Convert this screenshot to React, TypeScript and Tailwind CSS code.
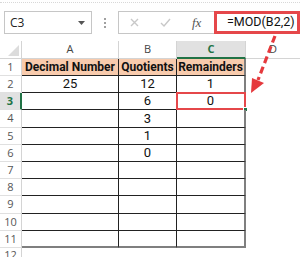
import React from "react";

const rows = [
  { n: 1, a: "Decimal Number", b: "Quotients", c: "Remainders", h: true },
  { n: 2, a: "25", b: "12", c: "1" },
  { n: 3, a: "", b: "6", c: "0" },
  { n: 4, a: "", b: "3", c: "" },
  { n: 5, a: "", b: "1", c: "" },
  { n: 6, a: "", b: "0", c: "" },
  { n: 7, a: "", b: "", c: "" },
  { n: 8, a: "", b: "", c: "" },
  { n: 9, a: "", b: "", c: "" },
  { n: 10, a: "", b: "", c: "" },
  { n: 11, a: "", b: "", c: "" },
];

const cellFont = { fontFamily: "Roboto, 'Open Sans', sans-serif" };

export default function App() {
  return (
    <div className="relative w-[300px] h-[257px] bg-white overflow-hidden" style={cellFont}>
      {/* toolbar */}
      <div className="h-[41px] flex flex-col">
        <div className="h-[3px] border-b border-dotted border-[#d8d8d8]" />
        <div className="flex items-start mt-[8px]">
          <div className="ml-[4px] w-[88px] h-[23px] border border-[#c6c6c6] flex items-center justify-between pl-[5px] pr-[6px]">
            <span className="text-[12px] text-[#222]" style={{ fontFamily: "'Open Sans', sans-serif" }}>C3</span>
            <svg width="7" height="4" viewBox="0 0 7 4"><path d="M0 0 L7 0 L3.5 4 Z" fill="#555" /></svg>
          </div>
          <div className="w-[26px] h-[23px] flex flex-col items-center justify-center gap-[2px]">
            <div className="w-[2px] h-[2px] bg-[#a0a0a0]" />
            <div className="w-[2px] h-[2px] bg-[#a0a0a0]" />
            <div className="w-[2px] h-[2px] bg-[#a0a0a0]" />
          </div>
          <div className="flex-1 h-[23px] border border-r-0 border-[#c6c6c6] flex items-center">
            <div className="w-[95px] flex items-center">
              <svg className="ml-[11px]" width="9" height="9" viewBox="0 0 9 9">
                <path d="M1 1 L8 8 M8 1 L1 8" stroke="#c8c8c8" strokeWidth="1.4" />
              </svg>
              <svg className="ml-[21px]" width="11" height="9" viewBox="0 0 11 9">
                <path d="M1 5 L4 8 L10 1" stroke="#c8c8c8" strokeWidth="1.4" fill="none" />
              </svg>
              <span className="ml-[21px] text-[13px] italic text-[#555]" style={{ fontFamily: "'Liberation Serif', serif" }}>fx</span>
            </div>
            <div className="w-[86px] h-[23px] border-[3px] border-[#e5474a] flex items-center pl-[10px]">
              <span className="text-[12.5px] text-[#111] whitespace-nowrap">=MOD(B2,2)</span>
            </div>
          </div>
        </div>
      </div>

      {/* column headers */}
      <div className="flex h-[18px] text-[11px] text-[#444]" style={{ fontFamily: "'Open Sans', sans-serif" }}>
        <div className="relative w-[22px] border-r border-b border-[#d4d4d4]">
          <svg className="absolute right-[2px] bottom-[2px]" width="11" height="11" viewBox="0 0 11 11">
            <path d="M11 0 L11 11 L0 11 Z" fill="#dcdcdc" />
          </svg>
        </div>
        <div className="w-[97px] flex items-center justify-center border-r border-b border-[#d4d4d4]">A</div>
        <div className="w-[58px] flex items-center justify-center border-r border-b border-[#d4d4d4]">B</div>
        <div className="w-[69px] flex items-center justify-center bg-[#e1e1e1] border-r border-[#d4d4d4] border-b-2 border-b-[#217346] text-[#217346] font-bold">C</div>
        <div className="flex-1 flex items-center justify-center border-b border-[#d4d4d4]">D</div>
      </div>

      {/* rows */}
      {rows.map((r) => {
        const sel = r.n === 3;
        const h = r.n === 4 || r.n === 9 ? "h-[18px]" : "h-[17px]";
        const last = r.n === 11;
        const bb = last ? "border-b-2 border-b-[#7f7f7f]" : "border-b border-b-[#222]";
        const bg = r.h ? "bg-[#f8cbad] font-bold text-[12px]" : "text-[13px]";
        return (
          <div key={r.n} className={`flex ${h}`}>
            <div
              className={`w-[22px] flex items-center justify-center text-[11px] border-b border-[#e0e0e0] ${
                sel ? "bg-[#e1e1e1] text-[#217346] font-bold border-r-2 border-r-[#217346]" : "text-[#555] border-r border-r-[#d4d4d4]"
              }`}
              style={{ fontFamily: "'Open Sans', sans-serif" }}
            >
              {r.n}
            </div>
            <div className={`w-[97px] flex items-center justify-center whitespace-nowrap text-[#111] border-r border-r-[#222] ${bb} ${bg}`}>{r.a}</div>
            <div className={`w-[58px] flex items-center justify-center whitespace-nowrap text-[#111] border-r border-r-[#222] ${bb} ${bg}`}>{r.b}</div>
            <div className={`relative w-[69px] flex items-center justify-center whitespace-nowrap text-[#111] border-r-2 border-r-[#7f7f7f] ${bb} ${bg}`}>
              {r.c}
              {sel && (
                <>
                  <div className="absolute left-[-1px] top-[-1px] right-[-2px] bottom-[-1px] border-2 border-[#e5474a]" />
                  <div className="absolute right-[-4px] bottom-[-3px] w-[5px] h-[5px] bg-[#217346] border border-white" />
                </>
              )}
            </div>
            <div className="flex-1" />
          </div>
        );
      })}
      <div className="flex h-[12px]">
        <div className="w-[22px] flex items-start justify-center text-[11px] text-[#555] border-r border-[#d4d4d4] leading-[14px]" style={{ fontFamily: "'Open Sans', sans-serif" }}>12</div>
      </div>

      {/* dashed arrow overlay */}
      <svg className="absolute left-0 top-0 pointer-events-none" width="300" height="257" viewBox="0 0 300 257">
        <line x1="275" y1="36" x2="258" y2="80" stroke="#e5393d" strokeWidth="3.2" strokeDasharray="7 4" />
        <path d="M251 93 L252 78 L264 83 Z" fill="#e5393d" />
      </svg>
    </div>
  );
}
